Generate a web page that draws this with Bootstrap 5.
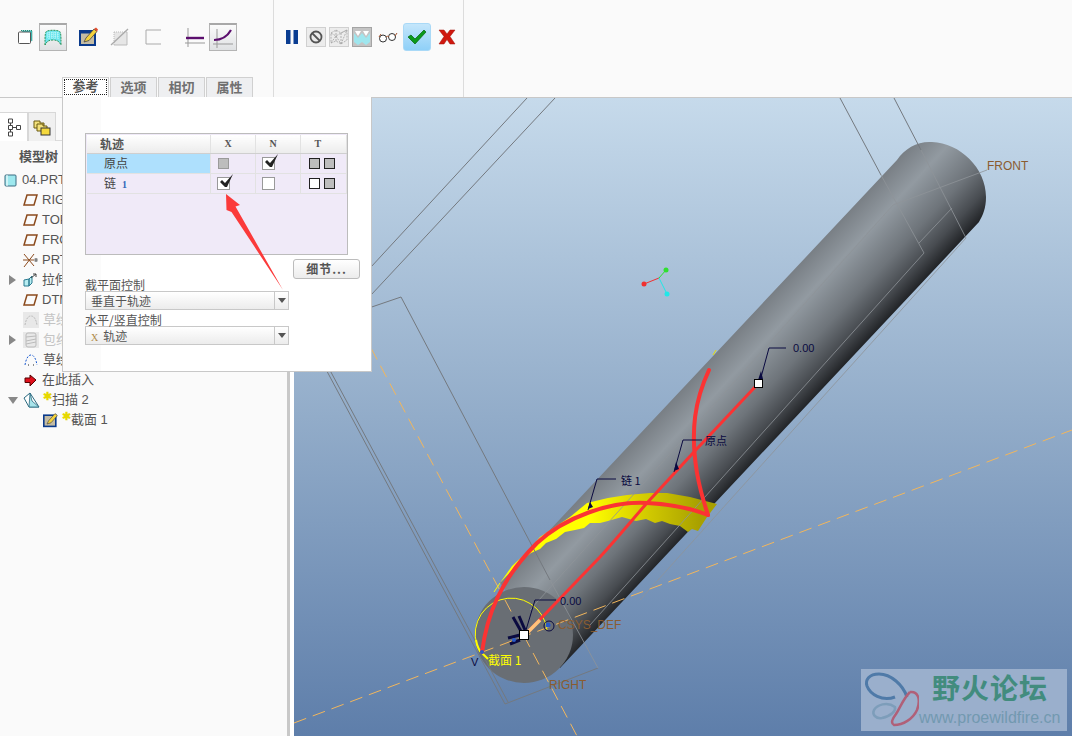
<!DOCTYPE html>
<html lang="en">
<head>
<meta charset="UTF-8">
<title>Sweep - model</title>
<link href="https://cdn.jsdelivr.net/npm/bootstrap@5.3.0/dist/css/bootstrap.min.css" rel="stylesheet">
<style>
    html, body { margin: 0; height: 736px; overflow: hidden; }
    body {
        width: 1072px; position: relative; background: #fafafa; color: #444;
        font: 12px/16px "Liberation Sans", "Noto Sans CJK SC", sans-serif;
    }

    /* ribbon */
    .ribbon { height: 98px; background: #fafafa; border-bottom: 1px solid #c8c8c8; }
    .rb-group { height: 97px; border-right: 1px solid #dcdcdc; }
    .rb-one { width: 274px; }
    .rb-two { width: 190px; }
    .rb-tools { height: 28px; margin-top: 23px; padding-left: 11px; }
    .tb-slot { width: 28px; height: 28px; flex: none; }
    .tb-small { width: 20px; height: 20px; flex: none; }
    .tb-on { background: linear-gradient(#fbfbfb, #dfe1e3); border: 1px solid #b4b4b4; border-top: 2px solid #a8a8a8; }
    .tb-ok { background: linear-gradient(#c4e6fb, #8fd0f8); border-radius: 3px; border: 1px solid #a9d9f7; }
    .tb-grey { background: #ececec; border: 1px solid #d0d0d0; }
    .tb-dark { background: #c4c4c4; border: 1px solid #a4a4a4; }
    .m3 { margin-left: 3px; } .m5 { margin-left: 5px; } .m6 { margin-left: 6px; }
    .m7 { margin-left: 7px; } .m8 { margin-left: 8px; } .m14 { margin-left: 14px; }
    .rb-tabs { margin: 26px 0 0 62px; height: 20px; }
    .rb-tab {
        width: 47px; height: 20px; margin-right: 1px; background: #eeeff1;
        border: 1px solid #d0d0d0; border-bottom: 0; text-align: center;
        font: bold 13px/18px "Noto Sans CJK SC", sans-serif; color: #707070;
    }
    .rb-tab-on { background: #fff; color: #555; line-height: 16px; outline: 1px dotted #222; outline-offset: -3px; }

    /* left side */
    .work { height: 638px; }
    .side { width: 287px; height: 638px; background: #fafafa; flex: none; }
    .split { width: 7px; flex: none; background: #fff; border-left: 3px solid #c8c8c8; }
    .view { width: 778px; height: 638px; flex: none; display: block; }
    .side-tabs { height: 43px; padding-top: 14px; border-bottom: 1px solid #dcdcdc; }
    .side-tab { width: 28px; height: 29px; border: 1px solid #d8d8d8; border-bottom: 0; background: #f0f0f0; }
    .side-tab-on { background: #fff; border-left: 0; }
    .tree-title { font: bold 13px/29px "Noto Sans CJK SC", sans-serif; color: #555; padding-left: 19px; }
    .tree-row { height: 20px; white-space: nowrap; font-size: 13px; color: #555; }
    .tree-row svg { flex: none; }
    .tw { width: 23px; flex: none; padding-left: 9px; }
    .tw-r { width: 0; height: 0; display: block; border: 5px solid transparent; border-left: 7px solid #888; border-right: 0; }
    .tw-d { width: 0; height: 0; display: block; margin-left: -1px; border: 5px solid transparent; border-top: 7px solid #888; border-bottom: 0; }
    .t-root { padding-left: 4px; }
    .t-lbl { margin-left: 4px; }
    .t-root .t-lbl { margin-left: 5px; }
    .t-off { color: #c4c4c4; }
    .t-deep { padding-left: 43px; }
    .t-star { color: #e6d800; font-size: 11px; font-weight: bold; line-height: 10px; align-self: flex-start; margin: 1px 0 0 3px; }

    /* popup panel */
    .sweep-panel {
        position: absolute; left: 62px; top: 97px; width: 310px; height: 275px;
        background: linear-gradient(90deg, #fbfbfb 38px, #fff 38px);
        border: 1px solid #c8c8c8; border-top-color: transparent; padding: 35px 11px 0 22px;
    }
    .ref-box { width: 263px; height: 122px; background: #f0eaf8; border: 1px solid #bcbcbc; padding: 1px; }
    .ref-table { width: 259px; table-layout: fixed; border-collapse: collapse; }
    .ref-w1 { width: 123px; } .ref-w2 { width: 45px; } .ref-w3 { width: 46px; }
    .ref-table th {
        height: 18px; background: linear-gradient(#fff, #ececec); border-right: 1px solid #e2e2e2; border-bottom: 1px solid #cfcfcf;
        text-align: left; padding-left: 14px; font: bold 10px/14px "Liberation Serif", serif; color: #555;
    }
    .ref-table th.ref-name { font: bold 12px/14px "Noto Sans CJK SC", sans-serif; padding-left: 13px; }
    .ref-table td { height: 20px; border-right: 1px solid #e2e2e2; border-bottom: 1px solid #e2e2e2; padding: 0; }
    .ref-pick { background: #aee0fd; }
    .ref-cell { font: 12px/14px "Noto Sans CJK SC", sans-serif; color: #444; padding-left: 17px !important; }
    .ref-num { color: #2f66b8; font: bold 10px "Liberation Serif", serif; margin-left: 6px; }
    .ck-wrap { padding-left: 6px; }
    .ck-wrap2 { padding-left: 8px; }
    .ck { width: 13px; height: 13px; display: block; background: #fff; border: 1px solid #999; position: relative; }
    .ck-grey { background: #bdbdbd; border-color: #9a9a9a; width: 11px; height: 11px; margin-left: 1px; }
    .ck-t { width: 11px; height: 11px; display: block; background: #bdbdbd; border: 1px solid #222; }
    .ck-w { background: #fff; }
    .ck svg { position: absolute; left: 0; top: -4px; }
    .dt-btn {
        width: 67px; height: 20px; margin-top: 4px; background: linear-gradient(#fff, #ececec); border: 1px solid #bcbcbc; border-radius: 3px;
        font: bold 12px/18px "Noto Sans CJK SC", sans-serif; color: #555; text-align: center; letter-spacing: 1px;
    }
    .pn-lbl { font: 12px/12px "Noto Sans CJK SC", sans-serif; color: #555; }
    .pn-lbl-b { margin-top: 4px; }
    .pn-sel {
        width: 204px; height: 19px; background: linear-gradient(#fff, #ececec); border: 1px solid #c8c8c8;
        font: 12px/17px "Noto Sans CJK SC", sans-serif; color: #555; padding-left: 5px;
    }
    .pn-x { font: 10px "Liberation Serif", serif; color: #b08a4a; margin-right: 5px; }
    .pn-arrow { width: 14px; height: 17px; border-left: 1px solid #c8c8c8; flex: none; }
    .pn-arrow i { width: 0; height: 0; display: block; border: 4px solid transparent; border-top: 5px solid #555; border-bottom: 0; }
    .note-arrow { position: absolute; left: 220px; top: 190px; }

    /* viewport text */
    .v-dim { font: 11px "Liberation Sans", sans-serif; fill: #0a0a40; }
    .v-cjk { font: 11px "Noto Sans CJK SC", sans-serif; fill: #0a0a40; }
    .v-dat { font: 12px "Liberation Sans", sans-serif; fill: #8a5c30; }
    .v-sec { font: 12px "Noto Sans CJK SC", sans-serif; fill: #ffff00; }

    /* forum stamp */
    .stamp {
        position: absolute; right: 5px; bottom: 5px; width: 206px; height: 62px;
        background: #9aafcc; padding-left: 2px;
    }
    .stamp-name { font: bold 28px/30px "Liberation Sans", "Noto Sans CJK SC", sans-serif; color: #428c7e; letter-spacing: 1px; margin: 6px 0 0 13px; height: 30px; }
    .stamp-url { font: 16px/18px "Liberation Sans", sans-serif; color: #7299b0; margin-top: 4px; white-space: nowrap; }
</style>
</head>
<body>

<!-- ribbon -->
<div class="ribbon d-flex">
    <div class="rb-group rb-one">
        <div class="rb-tools d-flex align-items-center">
            <div class="tb-slot d-flex align-items-center justify-content-center">
                <svg width="16" height="16" viewBox="0 0 16 16"><path d="M4 1.500h11v11" fill="#3fc0c0" stroke="#2a8a70" stroke-dasharray="1 1"/><rect x="1.500" y="3" width="12" height="11.500" rx="1" fill="#fff" stroke="#555"/></svg>
            </div>
            <div class="tb-slot tb-on d-flex align-items-center justify-content-center">
                <svg width="20" height="18" viewBox="0 0 20 18"><path d="M2 16C2 6 2 3 4 2c4-1 8-1 12 0 2 1 2 4 2 14-2-4-4-5-8-5s-6 1-8 5z" fill="#6fe6ee"/><path d="M4 4h12M4 6h12M4 8h12M6 3v7M9 3v7M12 3v7M15 3v7" stroke="#e8ffff" stroke-width=".7" stroke-dasharray="1 1"/><path d="M2 16C2 6 2 3 4 2c4-1 8-1 12 0 2 1 2 4 2 14-2-4-4-5-8-5s-6 1-8 5z" fill="none" stroke="#1d8a4a" stroke-width=".9" stroke-dasharray="2 1"/></svg>
            </div>
            <div class="tb-slot m8 d-flex align-items-center justify-content-center">
                <svg width="20" height="20" viewBox="0 0 20 20"><rect x="1" y="4" width="15" height="14" fill="#c4bca4" stroke="#0a3a8c" stroke-width="2"/><rect x="1" y="4" width="15" height="2.500" fill="#0a3a8c"/><path d="M5 15l2-4L15 2l3 2.500-8 9z" fill="#f4d23c" stroke="#444" stroke-width=".8"/><path d="M15 2l3 2.500 1-2-2-2z" fill="#e04a2c"/></svg>
            </div>
            <div class="tb-slot m3 d-flex align-items-center justify-content-center">
                <svg width="20" height="18" viewBox="0 0 20 18"><path d="M4 4h13v13H4z" fill="#e6e6e6"/><path d="M4 4h13M4 4v13" stroke="#bbb" stroke-dasharray="1 1"/><path d="M1 17L18 1" stroke="#aaa" stroke-width="1.300"/><path d="M17 4v13H4" fill="none" stroke="#bbb"/></svg>
            </div>
            <div class="tb-slot m5 d-flex align-items-center justify-content-center">
                <svg width="16" height="16" viewBox="0 0 16 16"><path d="M16 1H1v14h15" fill="none" stroke="#aaa"/></svg>
            </div>
            <div class="tb-slot m14 d-flex align-items-center justify-content-center">
                <svg width="20" height="20" viewBox="0 0 20 20"><path d="M3 1v19M0 16h20" stroke="#999" fill="none"/><path d="M1 11h18" stroke="#5c0f6e" stroke-width="2.400"/></svg>
            </div>
            <div class="tb-slot tb-on d-flex align-items-center justify-content-center">
                <svg width="20" height="20" viewBox="0 0 20 20"><path d="M4 1v19M0 16h20" stroke="#999" fill="none"/><path d="M1 12c8 0 13-3 17-10" stroke="#5c0f6e" stroke-width="2.200" fill="none"/></svg>
            </div>
        </div>
        <div class="rb-tabs d-flex">
            <div class="rb-tab rb-tab-on">参考</div>
            <div class="rb-tab">选项</div>
            <div class="rb-tab">相切</div>
            <div class="rb-tab">属性</div>
        </div>
    </div>
    <div class="rb-group rb-two">
        <div class="rb-tools d-flex align-items-center">
            <svg width="14" height="14" viewBox="0 0 14 14" class="flex-none"><path d="M1 0h4.500v14H1zM8.500 0H13v14H8.500z" fill="#0a3d91"/></svg>
            <div class="tb-small tb-grey m7 d-flex align-items-center justify-content-center">
                <svg width="14" height="14" viewBox="0 0 14 14"><circle cx="7" cy="7" r="5.500" fill="none" stroke="#555" stroke-width="1.800"/><path d="M3 3l8 8" stroke="#555" stroke-width="1.800"/></svg>
            </div>
            <div class="tb-small tb-grey m3 d-flex align-items-center justify-content-center">
                <svg width="18" height="16" viewBox="0 0 18 16"><path d="M1 4l5-3 5 3 6-3v10l-6 4-5-3-5 2zM6 1v11M11 4v11M1 4l5 3 5-3M6 7l5 8M17 1l-6 3M1 14l5-7M11 15l6-14" fill="none" stroke="#999" stroke-width=".7" stroke-dasharray="2 1"/></svg>
            </div>
            <div class="tb-small tb-dark m3 d-flex align-items-center justify-content-center">
                <svg width="18" height="18" viewBox="0 0 18 18"><path d="M1 5L5 10L9 5L13 10L17 5V14L13 17L9 14L5 17L1 14Z" fill="#9fe6ee"/><path d="M2 3h6L5 8zM10 3h6l-3 5z" fill="#fff"/></svg>
            </div>
            <div class="tb-small m6 d-flex align-items-center justify-content-center">
                <svg width="20" height="12" viewBox="0 0 20 12"><circle cx="5" cy="7.500" r="3.500" fill="#fff" stroke="#333"/><circle cx="14" cy="6" r="3.500" fill="#fff" stroke="#333"/><path d="M8 6c1-1 2-1 3 0M1 6L3 3M17 5l2-3" fill="none" stroke="#a0522d"/></svg>
            </div>
            <div class="tb-slot tb-ok m5 d-flex align-items-center justify-content-center">
                <svg width="20" height="16" viewBox="0 0 20 16"><path d="M1 8l3-2 4 4 9-9 2 2L8 15z" fill="#0a9a1a" stroke="#06620f" stroke-width=".7"/></svg>
            </div>
            <div class="tb-small m6 d-flex align-items-center justify-content-center">
                <svg width="18" height="16" viewBox="0 0 18 16"><path d="M1 1h5l3 4 3-4h5l-5 6.500 5 7.500h-5l-3-4.500L6 15H1l5-7.500z" fill="#d0180f" stroke="#a01008" stroke-width=".5"/></svg>
            </div>
        </div>
    </div>
</div>

<div class="work d-flex">
    <!-- model tree -->
    <div class="side overflow-hidden">
        <div class="side-tabs d-flex">
            <div class="side-tab side-tab-on d-flex align-items-center justify-content-center">
                <svg width="14" height="19" viewBox="0 0 14 19"><path d="M1.500 1h4v4h-4zM1.500 7.500h4v4h-4zM9.500 7.500h4v4h-4zM1.500 14h4v4h-4zM3.500 5v2.500M3.500 11.500V14M5.500 9.500h4" fill="none" stroke="#444"/></svg>
            </div>
            <div class="side-tab d-flex align-items-center justify-content-center">
                <svg width="18" height="18" viewBox="0 0 18 18"><path d="M1 3h6v2h4v5H1z" fill="#f4e27c" stroke="#6a5a10"/><path d="M4 6h6v2h4v5H4z" fill="#f4e27c" stroke="#6a5a10"/><rect x="8" y="10" width="9" height="7" fill="#f4d83c" stroke="#333"/></svg>
            </div>
        </div>
        <div class="tree-title">模型树</div>
        <div class="tree-row t-root d-flex align-items-center">
            <svg width="13" height="13" viewBox="0 0 13 13"><rect x="1" y="1" width="11" height="11" rx="1" fill="#9de8ee" stroke="#3a6a80"/><path d="M3 1v11" stroke="#fff"/></svg>
            <span class="t-lbl">04.PRT</span>
        </div>
        <div class="tree-row d-flex align-items-center"><span class="tw"></span>
            <svg width="15" height="12" viewBox="0 0 15 12"><path d="M4 1h10l-3 10H1z" fill="none" stroke="#8b4a1c" stroke-width="1.500"/></svg><span class="t-lbl">RIGHT</span></div>
        <div class="tree-row d-flex align-items-center"><span class="tw"></span>
            <svg width="15" height="12" viewBox="0 0 15 12"><path d="M4 1h10l-3 10H1z" fill="none" stroke="#8b4a1c" stroke-width="1.500"/></svg><span class="t-lbl">TOP</span></div>
        <div class="tree-row d-flex align-items-center"><span class="tw"></span>
            <svg width="15" height="12" viewBox="0 0 15 12"><path d="M4 1h10l-3 10H1z" fill="none" stroke="#8b4a1c" stroke-width="1.500"/></svg><span class="t-lbl">FRONT</span></div>
        <div class="tree-row d-flex align-items-center"><span class="tw"></span>
            <svg width="15" height="15" viewBox="0 0 15 15"><path d="M1 1l10 12M11 1L1 14M0 7h11" stroke="#8b4a1c" fill="none"/><path d="M11 7h4M12 5l2 4M14 5l-2 4" stroke="#777"/></svg><span class="t-lbl">PRT_CSYS</span></div>
        <div class="tree-row d-flex align-items-center"><span class="tw"><i class="tw-r"></i></span>
            <svg width="15" height="15" viewBox="0 0 15 15"><path d="M1 7l5-1v7H1zM6 6l3-3v7l-3 3z" fill="#b8eef2" stroke="#2a7a90"/><path d="M8 5l5-4M10 1h3v3" fill="none" stroke="#444"/></svg><span class="t-lbl">拉伸 1</span></div>
        <div class="tree-row d-flex align-items-center"><span class="tw"></span>
            <svg width="15" height="12" viewBox="0 0 15 12"><path d="M4 1h10l-3 10H1z" fill="none" stroke="#8b4a1c" stroke-width="1.500"/></svg><span class="t-lbl">DTM1</span></div>
        <div class="tree-row d-flex align-items-center"><span class="tw"></span>
            <svg width="16" height="16" viewBox="0 0 16 16"><rect width="16" height="16" fill="#e8e8e8"/><path d="M2 13c1-6 3-9 6-9s5 3 6 9" fill="none" stroke="#bbb" stroke-dasharray="2 1"/></svg><span class="t-lbl t-off">草绘 1</span></div>
        <div class="tree-row d-flex align-items-center"><span class="tw"><i class="tw-r"></i></span>
            <svg width="16" height="16" viewBox="0 0 16 16"><rect width="16" height="16" fill="#e8e8e8"/><rect x="3" y="1" width="10" height="14" rx="2" fill="none" stroke="#bbb"/><path d="M3 5l10-1M3 9l10-2M3 12l10-2" stroke="#bbb"/></svg><span class="t-lbl t-off">包络 1</span></div>
        <div class="tree-row d-flex align-items-center"><span class="tw"></span>
            <svg width="16" height="14" viewBox="0 0 16 14"><path d="M2 12c1-6 3-10 6-10s5 4 6 10" fill="none" stroke="#1a5ad0" stroke-dasharray="2 1.500"/><path d="M5 12h1M10 12h1" stroke="#222"/></svg><span class="t-lbl">草绘 2</span></div>
        <div class="tree-row d-flex align-items-center"><span class="tw"></span>
            <svg width="15" height="13" viewBox="0 0 15 13"><path d="M2 4h5V1l6 5-6 6V8.500H2z" fill="#e0101c" stroke="#500"/></svg><span class="t-lbl">在此插入</span></div>
        <div class="tree-row d-flex align-items-center"><span class="tw"><i class="tw-d"></i></span>
            <svg width="17" height="17" viewBox="0 0 17 17"><path d="M1 6l6-5 9 14H6z" fill="#fff" stroke="#2a6a80"/><path d="M7 1l2 8 7 6H6z" fill="#a8e4ea" stroke="#2a6a80" stroke-width=".8"/></svg><span class="t-star">✱</span><span>扫描 2</span></div>
        <div class="tree-row t-deep d-flex align-items-center">
            <svg width="16" height="16" viewBox="0 0 20 20"><rect x="1" y="4" width="15" height="14" fill="#c4bca4" stroke="#0a3a8c" stroke-width="2"/><path d="M5 15l2-4L15 2l3 2.500-8 9z" fill="#f4d23c" stroke="#444" stroke-width=".8"/></svg><span class="t-star">✱</span><span>截面 1</span></div>
    </div>
    <div class="split"></div>

    <!-- graphics window, viewBox uses page coordinates -->
    <svg class="view" viewBox="294 98 778 638">
        <defs>
            <linearGradient id="bgV" x1="0" y1="0" x2="0" y2="1"><stop offset="0" stop-color="#c6daeb"/><stop offset=".5" stop-color="#92acc9"/><stop offset="1" stop-color="#5e7eaa"/></linearGradient>
            <linearGradient id="cyl" gradientUnits="userSpaceOnUse" x1="727" y1="340" x2="804" y2="412"><stop offset="0" stop-color="#787e84"/><stop offset=".27" stop-color="#929aa1"/><stop offset=".6" stop-color="#6e747a"/><stop offset=".82" stop-color="#484c51"/><stop offset="1" stop-color="#1c1e21"/></linearGradient>
            <linearGradient id="band" gradientUnits="userSpaceOnUse" x1="590" y1="0" x2="700" y2="0"><stop offset="0" stop-color="#ffff00"/><stop offset=".45" stop-color="#d8d000"/><stop offset="1" stop-color="#a8a000"/></linearGradient>
        </defs>
        <rect x="294" y="98" width="778" height="638" fill="url(#bgV)"/>
        <path d="M371 348L505 600" fill="none" stroke="#f2b65c" stroke-dasharray="13 7"/>

        <!-- cylinder -->
        <path d="M897 160C905 148 918 141 932 142C960 143 986 168 986 197C986 208 983 215 979 222L560 668L500 583Z" fill="url(#cyl)"/>
        <ellipse cx="524" cy="635" rx="49" ry="48" fill="#696e74"/>

        <!-- yellow sweep band -->
        <path d="M500 583L512 566L527 552L540 537L552 529L570 517L587 503L608 498L627 495L650 493L667 493L690 497L717 504L707 517L698 531L692 529L688 532L680 526L670 524L662 521L655 523L646 519L636 521L622 517L608 521L600 523L590 523L584 528L575 530L565 532L556 539L546 543L540 549L531 553L522 560L512 570Z" fill="url(#band)"/>
        <path d="M716 350l-3 5" stroke="#e8e000"/>
        <path d="M500 583L494 592" fill="none" stroke="#ffff00"/>

        <!-- datum planes, darker on the background -->
        <g fill="none" stroke="#74797f">
            <path d="M527 98L371 267M555 98L371 295"/>
            <path d="M360 311L401 297L550 580M322 362L505 704L598 668M325 361L508 702"/>
            <path d="M840 98L881 175M894 98L921 150"/>
        </g>
        <!-- and lighter where they cross the part -->
        <g fill="none" stroke="#8e9399" stroke-opacity=".8">
            <path d="M881 175L924 253L590 625M921 150L966 238L640 600"/>
            <path d="M987 170L893 205L530 610M952 208L919 243M550 580L598 668"/>
        </g>
        <path d="M505 600L577 736M294 723L1072 430" fill="none" stroke="#f2b65c" stroke-dasharray="13 7"/>

        <path d="M480 652A36 36 0 1 1 547 630" fill="none" stroke="#ffff00"/>
        <path d="M476 640c1 6 3 11 7 14l5 5" fill="none" stroke="#ffff00" stroke-width="2"/>

        <!-- trajectories -->
        <g fill="none" stroke="#fb3333" stroke-linecap="round">
            <path d="M482 652C487 615 500 580 537 543C565 517 610 501 647 503C670 504 690 508 708 515" stroke-width="4"/>
            <path d="M709 370C695 400 690 430 697 473C700 490 704 503 708 515" stroke-width="4"/>
            <path d="M525 635L600 557C620 535 632 520 647 503L693 453L755 387" stroke-width="3"/>
        </g>
        <path d="M525 635L540 620" stroke="#ffc27a" stroke-width="3.500"/>

        <!-- csys triad -->
        <path d="M659 278L666 270" stroke="#2fe02f" fill="none"/><circle cx="666" cy="270" r="2.500" fill="#2fe02f"/>
        <path d="M659 278L644 284" stroke="#f03030" fill="none"/><circle cx="644" cy="284" r="2.500" fill="#f03030"/>
        <path d="M659 278L667 294" stroke="#20e8e8" fill="none"/><circle cx="667" cy="294" r="2.500" fill="#20e8e8"/>

        <!-- leaders -->
        <g fill="none" stroke="#0a0a40">
            <path d="M786 348H769L760 381"/>
            <path d="M702 440H683L674 472"/>
            <path d="M616 479H597L588 510"/>
            <path d="M556 600H535L526 630"/>
        </g>
        <path d="M761 371l-3 9 5-1zM676 462l-2 9 5-2zM590 502l-2 7 5-2z" fill="#0a0a40"/>

        <!-- frame handles -->
        <path d="M513 617L522 633M519 616L525 630M508 638L520 635M510 644L520 640" stroke="#0a0a40" stroke-width="3" fill="none"/>
        <circle cx="514" cy="640" r="2" fill="#2a5ac8"/><circle cx="548" cy="625" r="2.500" fill="#2a5ac8"/><circle cx="482" cy="652" r="2" fill="#2a5ac8"/>
        <circle cx="549" cy="626" r="5" fill="none" stroke="#0a0a40"/>
        <rect x="754.500" y="379.500" width="8" height="8" fill="#fff" stroke="#000"/>
        <rect x="519.500" y="630.500" width="9" height="9" fill="#fff" stroke="#000"/>

        <text class="v-dat" x="987" y="170">FRONT</text>
        <text class="v-dat" x="558" y="629">CSYS_DEF</text>
        <text class="v-dat" x="549" y="689">RIGHT</text>
        <text class="v-dim" x="793" y="352">0.00</text>
        <text class="v-dim" x="560" y="605">0.00</text>
        <text class="v-cjk" x="705" y="445">原点</text>
        <text class="v-cjk" x="621" y="485">链 1</text>
        <text class="v-dim" x="471" y="666">V</text>
        <text class="v-sec" x="488" y="665">截面 1</text>
    </svg>
</div>

<!-- sweep references panel -->
<div class="sweep-panel">
    <div class="ref-box">
        <table class="ref-table">
            <colgroup><col class="ref-w1"><col class="ref-w2"><col class="ref-w2"><col class="ref-w3"></colgroup>
            <thead>
                <tr><th class="ref-name">轨迹</th><th>X</th><th>N</th><th>T</th></tr>
            </thead>
            <tbody>
                <tr>
                    <td class="ref-pick ref-cell">原点</td>
                    <td><div class="ck-wrap d-flex"><i class="ck ck-grey"></i></div></td>
                    <td><div class="ck-wrap d-flex"><i class="ck"><svg width="17" height="16" viewBox="0 0 17 16"><path d="M2 8l2-2 3 3 8-9-6 13H7z" fill="#222"/></svg></i></div></td>
                    <td><div class="ck-wrap2 d-flex gap-1"><i class="ck-t"></i><i class="ck-t"></i></div></td>
                </tr>
                <tr>
                    <td class="ref-cell">链<span class="ref-num">1</span></td>
                    <td><div class="ck-wrap d-flex"><i class="ck"><svg width="17" height="16" viewBox="0 0 17 16"><path d="M2 8l2-2 3 3 8-9-6 13H7z" fill="#222"/></svg></i></div></td>
                    <td><div class="ck-wrap d-flex"><i class="ck"></i></div></td>
                    <td><div class="ck-wrap2 d-flex gap-1"><i class="ck-t ck-w"></i><i class="ck-t"></i></div></td>
                </tr>
            </tbody>
        </table>
    </div>
    <div class="d-flex justify-content-end"><div class="dt-btn">细节...</div></div>
    <div class="pn-lbl">截平面控制</div>
    <div class="pn-sel d-flex justify-content-between">
        <span>垂直于轨迹</span>
        <span class="pn-arrow d-flex align-items-center justify-content-center"><i></i></span>
    </div>
    <div class="pn-lbl pn-lbl-b">水平/竖直控制</div>
    <div class="pn-sel d-flex justify-content-between">
        <span><span class="pn-x">X</span>轨迹</span>
        <span class="pn-arrow d-flex align-items-center justify-content-center"><i></i></span>
    </div>
</div>

<!-- red callout arrow -->
<svg class="note-arrow" width="70" height="105" viewBox="220 190 70 105"><path d="M226 194L240 205L235.500 206.500L283 290L231.500 212L226.500 210Z" fill="#fb3a3a"/></svg>

<!-- forum stamp -->
<div class="stamp d-flex">
    <svg width="56" height="62" viewBox="0 0 56 62" class="flex-none">
        <path d="M44 28C40 16 28 5 16 5C6 5 2 11 4 17C7 25 19 33 32 28" fill="none" stroke="#4f7aa8" stroke-width="3"/>
        <path d="M19 49C12 50 9 45 11 41C14 36 24 32 32 38C33 42 28 47 19 49" fill="none" stroke="#7d9dba" stroke-width="2.500"/>
        <path d="M47 23C55 22 58 30 54 41C50 50 40 56 31 56C27 54 30 49 33 45C37 39 40 30 47 23" fill="none" stroke="#b06078" stroke-width="2.500"/>
    </svg>
    <div>
        <div class="stamp-name">野火论坛</div>
        <div class="stamp-url">www.proewildfire.cn</div>
    </div>
</div>

<script src="https://cdn.jsdelivr.net/npm/bootstrap@5.3.0/dist/js/bootstrap.bundle.min.js"></script>
</body>
</html>
